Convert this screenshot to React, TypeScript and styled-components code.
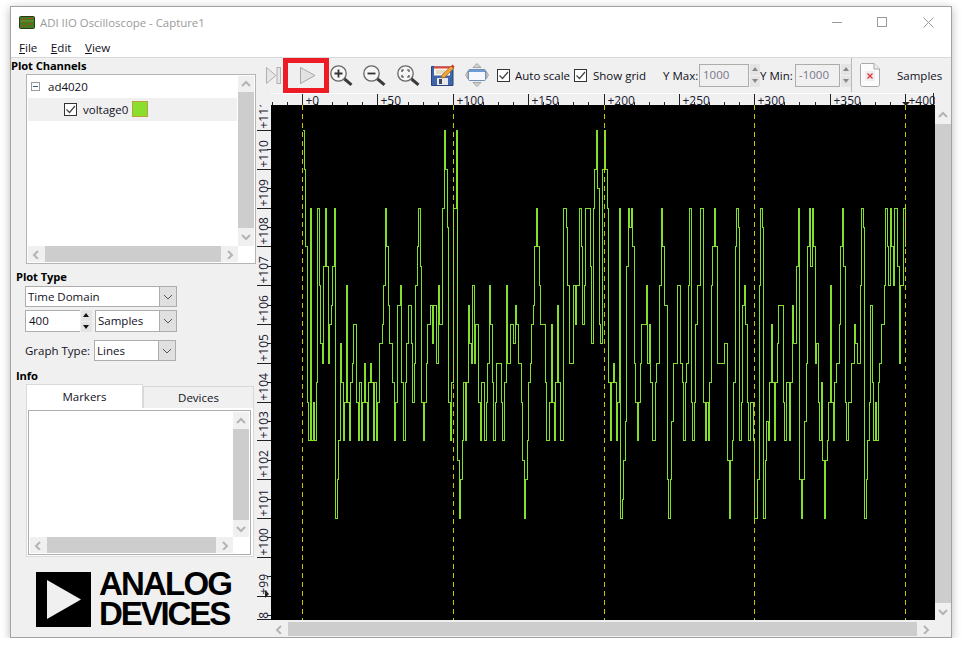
import React from "react";
import styled, { createGlobalStyle } from "styled-components";

const GlobalStyle = createGlobalStyle`
  html, body {
    margin: 0;
    padding: 0;
    background: #fff;
    overflow: hidden;
  }
  body {
    font-family: "Open Sans", "Liberation Sans", sans-serif;
    font-size: 11.5px;
    color: #10101c;
  }
`;

const Window = styled.div`
  box-sizing: border-box;
  width: 942px;
  height: 632px;
  margin: 6px 0 0 10px;
  display: flex;
  flex-direction: column;
  background: #f0f0f0;
  border: 1px solid #a3a3a3;
  box-shadow: 0 2px 9px rgba(0, 0, 0, 0.28);
`;

const TitleBar = styled.div`
  height: 30px;
  flex: none;
  display: flex;
  align-items: center;
  background: #fff;
  padding-left: 8px;
`;

const WindowTitle = styled.span`
  margin-left: 5px;
  font-size: 11.4px;
  color: #9a9a9a;
`;

const CaptionButtons = styled.div`
  margin-left: auto;
  display: flex;
`;

const CaptionButton = styled.div`
  width: 45.5px;
  height: 30px;
  display: flex;
  align-items: center;
  justify-content: center;
`;

const MenuBar = styled.div`
  height: 20px;
  flex: none;
  display: flex;
  background: #fff;
  border-bottom: 1px solid #d9d9d9;
  padding-left: 8px;
  gap: 13.5px;
  align-items: center;
`;

const MenuItem = styled.span`
  font-size: 11.6px;
  color: #10101c;
  & u { text-underline-offset: 1px; }
`;

const Body = styled.div`
  flex: 1;
  display: flex;
  min-height: 0;
`;

const Sidebar = styled.div`
  width: 246px;
  flex: none;
  display: flex;
  flex-direction: column;
`;

const SectionLabel = styled.div<{ $indent: number; $top: number }>`
  height: 16px;
  line-height: 16px;
  font-weight: 700;
  font-size: 11.2px;
  letter-spacing: -0.1px;
  color: #000;
  margin: ${(p) => p.$top}px 0 0 ${(p) => p.$indent}px;
`;

const TreeBox = styled.div`
  box-sizing: border-box;
  width: 230px;
  height: 190px;
  margin-left: 15px;
  background: #fff;
  border: 1px solid #b4b4b4;
  display: grid;
  grid-template-columns: 1fr 16px;
  grid-template-rows: 1fr 16px;
  padding: 1px;
`;

const TreeList = styled.div`
  padding-top: 1px;
  min-width: 0;
`;

const TreeRow = styled.div<{ $selected?: boolean; $indent: number }>`
  box-sizing: border-box;
  display: flex;
  align-items: center;
  height: ${(p) => (p.$selected ? 23 : 20)}px;
  margin-bottom: ${(p) => (p.$selected ? 0 : 1)}px;
  padding-left: ${(p) => p.$indent}px;
  padding-bottom: 1px;
  background: ${(p) => (p.$selected ? "#f0f0f0" : "transparent")};
  margin-right: 1px;
`;

const Expander = styled.span`
  box-sizing: border-box;
  width: 9px;
  height: 9px;
  border: 1px solid #9a9a9a;
  position: relative;
  margin-right: 8px;
  &::after {
    content: "";
    position: absolute;
    left: 1px;
    right: 1px;
    top: 3px;
    height: 1px;
    background: #3a5a90;
  }
`;

const Swatch = styled.span<{ $color: string }>`
  box-sizing: border-box;
  width: 16px;
  height: 16px;
  margin-left: 4px;
  background: ${(p) => p.$color};
  border: 1px solid #b7a53a;
`;

const RowText = styled.span`
  margin-left: 6px;
`;

const Checkbox = styled.span`
  box-sizing: border-box;
  width: 13px;
  height: 13px;
  flex: none;
  display: inline-flex;
  align-items: center;
  justify-content: center;
  background: #fff;
  border: 1px solid #333;
`;

const FormRow = styled.div<{ $indent: number; $top: number; $h: number }>`
  display: flex;
  align-items: stretch;
  height: ${(p) => p.$h}px;
  margin: ${(p) => p.$top}px 0 0 ${(p) => p.$indent}px;
`;

const Combo = styled.div<{ $w: number }>`
  box-sizing: border-box;
  width: ${(p) => p.$w}px;
  display: flex;
  background: #fff;
  border: 1px solid #adadad;
`;

const ComboText = styled.span`
  flex: 1;
  padding: 0 0 1px 2px;
  display: flex;
  align-items: center;
`;

const ComboArrow = styled.span`
  width: 16px;
  background: #e0e0e0;
  border-left: 1px solid #adadad;
  display: flex;
  align-items: center;
  justify-content: center;
`;

const NumberField = styled.div<{ $w: number; $disabled?: boolean }>`
  box-sizing: border-box;
  width: ${(p) => p.$w}px;
  display: flex;
  align-items: center;
  padding: 0 0 1px 3px;
  background: ${(p) => (p.$disabled ? "#f0f0f0" : "#fff")};
  color: ${(p) => (p.$disabled ? "#76768c" : "#10101c")};
  border: 1px solid #adadad;
  border-right-width: ${(p) => (p.$disabled ? 1 : 0)}px;
`;

const SpinButtons = styled.div<{ $muted?: boolean }>`
  width: ${(p) => (p.$muted ? 10 : 11)}px;
  margin: ${(p) => (p.$muted ? "0 0 0 1px" : "0 3px 0 1px")};
  display: flex;
  flex-direction: column;
  gap: 1px;
`;

const SpinButton = styled.span<{ $down?: boolean; $muted?: boolean }>`
  flex: 1;
  background: #e4e4e4;
  position: relative;
  &::after {
    content: "";
    position: absolute;
    left: 2px;
    top: 3px;
    border-left: 3px solid transparent;
    border-right: 3px solid transparent;
    ${(p) => (p.$down ? "border-top" : "border-bottom")}: 4px solid ${(p) => (p.$muted ? "#888" : "#111")};
  }
`;

const FieldLabel = styled.span<{ $w: number }>`
  width: ${(p) => p.$w}px;
  flex: none;
  display: flex;
  align-items: center;
  white-space: nowrap;
`;

const TabStrip = styled.div`
  display: flex;
  align-items: flex-end;
  height: 24px;
  margin-left: 15px;
`;

const Tab = styled.div<{ $active?: boolean; $w: number }>`
  box-sizing: border-box;
  width: ${(p) => p.$w}px;
  height: ${(p) => (p.$active ? 24 : 22)}px;
  padding-bottom: 1px;
  display: flex;
  align-items: center;
  justify-content: center;
  background: ${(p) => (p.$active ? "#fff" : "#f0f0f0")};
  border: 1px solid #d9d9d9;
  border-bottom: 0;
`;

const TabPane = styled.div`
  box-sizing: border-box;
  width: 228px;
  height: 149px;
  margin-left: 15px;
  padding: 2px 1px;
  background: #fff;
  border: 1px solid #d9d9d9;
  border-top: 0;
`;

const InfoList = styled.div`
  box-sizing: border-box;
  height: 145px;
  margin-right: 1px;
  border: 1px solid #adadad;
  display: grid;
  grid-template-columns: 1fr 16px;
  grid-template-rows: 1fr 16px;
  padding: 1px;
`;

const ScrollTrack = styled.div<{ $vertical?: boolean; $grow?: boolean }>`
  display: flex;
  flex-direction: ${(p) => (p.$vertical ? "column" : "row")};
  flex: ${(p) => (p.$grow ? 1 : "initial")};
  background: #f0f0f0;
`;

const ScrollEnd = styled.span<{ $len: number; $vertical?: boolean }>`
  flex: none;
  ${(p) => (p.$vertical ? "height" : "width")}: ${(p) => p.$len}px;
  display: flex;
  align-items: center;
  justify-content: center;
`;

const ScrollThumb = styled.span`
  flex: 1;
  background: #cdcdcd;
`;

const Logo = styled.div`
  display: flex;
  align-items: center;
  margin: 12px 0 0 25px;
  gap: 8px;
`;

const LogoText = styled.div`
  font-family: "Liberation Sans", Arial, sans-serif;
  font-weight: 700;
  font-size: 33px;
  line-height: 30px;
  color: #000;
`;

const LogoLine = styled.div<{ $spacing: number }>`
  letter-spacing: ${(p) => p.$spacing}px;
`;

const PlotColumn = styled.div`
  flex: 1;
  min-width: 0;
  display: flex;
  flex-direction: column;
`;

const Toolbar = styled.div`
  box-sizing: border-box;
  height: 35px;
  flex: none;
  display: flex;
  align-items: center;
  padding: 0 0 1px 9px;
`;

const ToolIcon = styled.span<{ $w: number; $gap?: number }>`
  width: ${(p) => p.$w}px;
  margin-left: ${(p) => p.$gap ?? 0}px;
  flex: none;
  display: flex;
  align-items: center;
  justify-content: flex-start;
`;

const HighlightedButton = styled.span`
  box-sizing: border-box;
  width: 46px;
  height: 35px;
  margin: 1px 0 0 2px;
  padding-left: 4px;
  flex: none;
  display: flex;
  align-items: center;
  justify-content: center;
  border: 5px solid #ed1c24;
`;

const ToolLabel = styled.span<{ $w: number; $gap: number }>`
  width: ${(p) => p.$w}px;
  margin-left: ${(p) => p.$gap}px;
  flex: none;
  white-space: nowrap;
`;

const ToolField = styled.div`
  height: 23px;
  display: flex;
  align-items: stretch;
  flex: none;
`;

const ToolSeparator = styled.span`
  width: 1px;
  height: 34px;
  background: #b9b9b9;
  flex: none;
`;

const ChartGrid = styled.div`
  flex: 1;
  display: grid;
  grid-template-columns: 14px 664px 16px;
  grid-template-rows: 12px 515px 17px;
`;

const Drawing = styled.svg`
  display: block;
`;

const RulerDrawing = styled(Drawing)<{ $span?: boolean }>`
  background: #f0f0f0;
  ${(p) => (p.$span ? "grid-row: 1 / span 2; grid-column: 1;" : "")}
`;

const PlotDrawing = styled(Drawing)`
  background: #000;
`;

const ChartCorner = styled.div`
  background: #f0f0f0;
`;

const HScrollWrap = styled.div`
  padding-top: 2px;
  padding-bottom: 1px;
  display: flex;
`;

const Chevron = ({ dir, color = "#b4b4b4" }: { dir: "up" | "down" | "left" | "right"; color?: string }) => {
  const points = {
    up: "1,6 5,2 9,6",
    down: "1,2 5,6 9,2",
    left: "6,1 2,5 6,9",
    right: "3,1 7,5 3,9",
  }[dir];
  return (
    <Drawing width="10" height="10" viewBox="0 0 10 8">
      <polyline points={points} fill="none" stroke={color} strokeWidth="2" />
    </Drawing>
  );
};

const Combobox = ({ w, text }: { w: number; text: string }) => (
  <Combo $w={w}>
    <ComboText>{text}</ComboText>
    <ComboArrow>
      <svg width="10" height="6" viewBox="0 0 10 6">
        <polyline points="1,1 5,5 9,1" fill="none" stroke="#555" strokeWidth="1" />
      </svg>
    </ComboArrow>
  </Combo>
);

const Check = () => (
  <Checkbox>
    <svg width="11" height="11" viewBox="0 0 11 11">
      <polyline points="1.5,5.5 4.5,8.5 10,2" fill="none" stroke="#444" strokeWidth="1.2" />
    </svg>
  </Checkbox>
);

const VScroll = ({ top, bottom }: { top: number; bottom: number }) => (
  <ScrollTrack $vertical>
    <ScrollEnd $vertical $len={top}><Chevron dir="up" /></ScrollEnd>
    <ScrollThumb />
    <ScrollEnd $vertical $len={bottom}><Chevron dir="down" /></ScrollEnd>
  </ScrollTrack>
);

const HScroll = ({ left, right }: { left: number; right: number }) => (
  <ScrollTrack $grow>
    <ScrollEnd $len={left}><Chevron dir="left" /></ScrollEnd>
    <ScrollThumb />
    <ScrollEnd $len={right}><Chevron dir="right" /></ScrollEnd>
  </ScrollTrack>
);

const AppIcon = () => (
  <svg width="16" height="13" viewBox="0 0 16 13">
    <rect x="0.5" y="0.5" width="15" height="12" rx="1" fill="#3f7d1e" stroke="#2c3a1c" />
    <path d="M2 3h4M9 2.5h5M3 6h3M8 8h5M3 10h4" stroke="#c23a2a" strokeWidth="1.2" />
    <path d="M1 5h14" stroke="#7fb04a" strokeWidth="0.6" />
  </svg>
);

const SkipIcon = () => (
  <svg width="15" height="17" viewBox="0 0 15 17">
    <path d="M0.5 0.5 L10 8.5 L0.5 16.5 Z" fill="#e6e6e6" stroke="#b0b0b0" />
    <rect x="11" y="0.5" width="3.5" height="16" fill="#e6e6e6" stroke="#b0b0b0" />
  </svg>
);

const PlayIcon = () => (
  <svg width="16" height="17" viewBox="0 0 16 17">
    <path d="M0.5 0.5 L15 8.5 L0.5 16.5 Z" fill="#e2e2e2" stroke="#a6a6a6" />
  </svg>
);

const Lens = ({ children }: { children?: React.ReactNode }) => (
  <svg width="23" height="21" viewBox="0 0 23 21">
    <circle cx="8.5" cy="8.5" r="7.7" fill="#f6f6f6" stroke="#666" strokeWidth="1.3" />
    <path d="M14.5 14 L21.5 19.8" stroke="#3a3a3a" strokeWidth="3" />
    {children}
  </svg>
);

const SaveIcon = () => (
  <svg width="24" height="22" viewBox="0 0 24 22">
    <path d="M0.5 2.5 L20 2.5 L22 4.5 L22 21.5 L0.5 21.5 Z" fill="#3f66a8" stroke="#27457c" />
    <rect x="3" y="2.5" width="16" height="9" fill="#fbf6ea" />
    <rect x="3" y="2.5" width="16" height="2" fill="#e0443a" />
    <path d="M5 7h9M5 9h9" stroke="#c9c2ae" />
    <rect x="6" y="14" width="11" height="7" fill="#e8e8ea" />
    <rect x="8" y="15" width="3" height="5" fill="#3a4a66" />
    <path d="M11 11 L20 2 L22.5 4.5 L13.5 13.5 L10.5 14 Z" fill="#f0a23a" stroke="#a8661c" strokeWidth="0.7" />
    <path d="M20 2 L21.5 0.6 L23.5 2.6 L22.5 4.5 Z" fill="#d8362e" />
  </svg>
);

const ResizeIcon = () => (
  <svg width="24" height="24" viewBox="0 0 24 24">
    <path d="M12 0.5 L16 4.5 L8 4.5 Z M12 23.5 L16 19.5 L8 19.5 Z M0.5 12 L3 8 L3 16 Z M23.5 12 L21 8 L21 16 Z" fill="#d2d2d2" stroke="#8c8c8c" strokeWidth="0.7" />
    <rect x="3.5" y="6.5" width="17" height="11" rx="1" fill="#f4f7fb" stroke="#6f8db8" />
    <rect x="4" y="7" width="16" height="2" fill="#6d9bd4" />
  </svg>
);

const DocIcon = () => (
  <svg width="20" height="24" viewBox="0 0 20 24">
    <path d="M1.5 0.5 L14 0.5 L19.5 6 L19.5 21.5 Q19.5 23.5 17.5 23.5 L2.5 23.5 Q0.5 23.5 0.5 21.5 L0.5 1.5 Z" fill="#fbfbfb" stroke="#a9a9a9" />
    <path d="M14 0.5 L14 6 L19.5 6" fill="#ececec" stroke="#a9a9a9" />
    <rect x="5" y="8" width="10" height="10" fill="#eeeeee" />
    <path d="M7.5 10.5 L12.5 15.5 M12.5 10.5 L7.5 15.5" stroke="#e8323c" strokeWidth="1.3" />
  </svg>
);

const LogoMark = () => (
  <Drawing width="55" height="55" viewBox="0 0 55 55">
    <rect width="55" height="55" fill="#000" />
    <polygon points="11,8 45,27.5 11,47" fill="#f0f0f0" />
  </Drawing>
);

// plot geometry
const PLOT_W = 664;
const PLOT_H = 515;
const X0 = 31; // sample 0 in plot coords
const PX_PER_SAMPLE = 1.5075;
const Y_TOP = 25; // y of value 111
const PX_PER_UNIT = 38.8;

const sampleX = (s: number) => Math.round(X0 + s * PX_PER_SAMPLE) + 0.5;
const halfY = (h: number) => Math.round(Y_TOP + (h * PX_PER_UNIT) / 2) + 0.5;

// spike positions read off the capture: [sample, half-step level below the top]
const PEAKS: [number, number][] = [
  [0, 0], [1, 2], [5, 4], [10, 4], [15, 4], [21, 4], [55, 4], [77, 4], [94, 0], [95, 2], [100, 4], [101, 4], [102, 0],
  [155, 4], [156, 6], [173, 4], [174, 4], [175, 5], [184, 4], [188, 4], [189, 4], [190, 4], [195, 0], [194, 2], [200, 0], [201, 2],
  [210, 4], [216, 4], [217, 5], [218, 4], [238, 4], [257, 4], [264, 4], [265, 4], [273, 4], [288, 4], [289, 5],
  [304, 4], [305, 5], [329, 4], [336, 4], [338, 4], [358, 4], [371, 4], [372, 5], [387, 4], [390, 4], [393, 4], [394, 4], [399, 4],
];
const DIPS: [number, number][] = [
  [4, 16], [6, 16], [8, 16], [22, 20], [23, 18], [27, 16], [31, 16], [37, 16], [39, 16], [43, 16], [47, 16], [49, 16], [61, 16], [67, 16], [80, 16], [98, 16],
  [104, 20], [106, 16], [108, 16], [118, 16], [121, 16], [127, 16], [133, 16], [147, 20], [148, 18], [149, 16], [162, 16], [163, 16], [167, 16], [171, 16], [172, 16],
  [204, 16], [208, 16], [211, 20], [212, 19], [213, 17], [222, 16], [232, 16], [233, 16], [243, 20], [244, 18], [253, 16], [259, 16], [267, 16], [269, 16],
  [283, 20], [284, 17], [285, 16], [290, 16], [296, 16], [299, 16], [300, 20], [301, 20], [306, 20], [307, 17], [309, 16], [313, 16], [320, 16], [323, 16],
  [331, 20], [332, 18], [343, 16], [346, 20], [347, 17], [348, 16], [352, 16], [361, 16], [373, 20], [374, 18], [375, 16], [379, 16], [381, 16],
];

const buildTrace = () => {
  let seed = 20240611;
  const rnd = () => {
    seed = (seed + 0x6d2b79f5) | 0;
    let t = Math.imul(seed ^ (seed >>> 15), 1 | seed);
    t = (t + Math.imul(t ^ (t >>> 7), 61 | t)) ^ t;
    return ((t ^ (t >>> 14)) >>> 0) / 4294967296;
  };
  // the noise walks between 107 and 105 in half steps, rarely lower
  const steps = [-4, -4, -2, -2, -1, 0, 0, 1, 2, 2, 4];
  const values: number[] = [10];
  for (let s = 1; s <= 400; s++) {
    let next = values[s - 1] + steps[Math.floor(rnd() * steps.length)];
    if (next < 8) next = 8 + (8 - next);
    if (next > 12) next = rnd() < 0.1 ? 14 : 12;
    values.push(next);
  }
  // staircase next to each spike, as the decimated capture shows
  PEAKS.forEach(([s, h]) => {
    if (s > 0 && values[s - 1] > h + 2) values[s - 1] = Math.min(8, h + 2 + Math.floor(rnd() * 3));
    if (s < 400 && values[s + 1] > h + 2) values[s + 1] = Math.min(8, h + 2 + Math.floor(rnd() * 3));
  });
  DIPS.forEach(([s, h]) => {
    if (s > 0 && values[s - 1] < h - 2) values[s - 1] = Math.max(13, h - 2 - Math.floor(rnd() * 2));
    if (s < 400 && values[s + 1] < h - 2) values[s + 1] = Math.max(13, h - 2 - Math.floor(rnd() * 2));
  });
  PEAKS.forEach(([s, h]) => { values[s] = h; });
  DIPS.forEach(([s, h]) => { values[s] = h; });
  let d = `M${sampleX(0)} ${halfY(values[0])}`;
  values.forEach((v, s) => {
    if (s === 0) return;
    d += `H${sampleX(s)}V${halfY(v)}`;
  });
  return d;
};

const TRACE = buildTrace();
const CURSORS = [0, 100, 200, 300, 400];

const rulerFont = { fontFamily: '"Open Sans", sans-serif', fontSize: 12, fill: "#1a1a30" };

const TopRuler = () => {
  const ticks: React.ReactNode[] = [];
  for (let v = -20; v <= 420; v += 10) {
    const x = Math.round(X0 + v * PX_PER_SAMPLE) + 0.5;
    if (x < 0 || x > PLOT_W) continue;
    const major = v % 50 === 0;
    ticks.push(<line key={v} x1={x} x2={x} y1={major ? 1 : 9} y2={12} stroke="#222" />);
    if (major && v >= 0 && v <= 400) {
      ticks.push(
        <text key={`t${v}`} x={x + 3} y={12} {...rulerFont}>{`+${v}`}</text>
      );
    }
  }
  return (
    <RulerDrawing width={PLOT_W} height={12}>
      <line x1="0" x2={PLOT_W} y1="0.5" y2="0.5" stroke="#fff" />
      {ticks}
      <line x1="662.5" x2="662.5" y1="0" y2="12" stroke="#222" />
      <polygon points="631,9 639,9 635,13" fill="#222" />
    </RulerDrawing>
  );
};

const LeftRuler = () => {
  const items: React.ReactNode[] = [];
  for (let i = 0; i <= 26; i++) {
    const y = Math.round(Y_TOP + (i * PX_PER_UNIT) / 2) + 0.5 + 12;
    const major = i % 2 === 0;
    items.push(<line key={i} x1={major ? 0 : 10} x2={14} y1={y} y2={y} stroke="#222" />);
    if (major) {
      const value = 111 - i / 2;
      items.push(
        <text key={`t${i}`} x={0} y={0} transform={`translate(11 ${y - 2}) rotate(-90)`} {...rulerFont}>
          {`+${value}`}
        </text>
      );
    }
  }
  return (
    <RulerDrawing $span width={14} height={527}>
      {items}
      <line x1="0" x2="14" y1="526.5" y2="526.5" stroke="#222" />
      <polygon points="8,497 12,501 8,505" fill="#222" />
      <rect x="0" y="0" width="14" height="12" fill="#f0f0f0" />
    </RulerDrawing>
  );
};

const PlotCanvas = () => (
  <PlotDrawing width={PLOT_W} height={PLOT_H} shapeRendering="crispEdges">
    <path d={TRACE} fill="none" stroke="#82e02c" strokeWidth="1" />
    {CURSORS.map((c) => (
      <line
        key={c}
        x1={sampleX(c)}
        x2={sampleX(c)}
        y1={0}
        y2={PLOT_H}
        stroke="#c8c800"
        strokeDasharray="5 4"
      />
    ))}
  </PlotDrawing>
);

export default function App() {
  return (
    <>
      <GlobalStyle />
      <Window>
        <TitleBar>
          <AppIcon />
          <WindowTitle>ADI IIO Oscilloscope - Capture1</WindowTitle>
          <CaptionButtons>
            <CaptionButton>
              <svg width="11" height="11" viewBox="0 0 11 11"><path d="M0 5.5H10" stroke="#9a9a9a" /></svg>
            </CaptionButton>
            <CaptionButton>
              <svg width="11" height="11" viewBox="0 0 11 11"><rect x="0.5" y="0.5" width="9" height="9" fill="none" stroke="#9a9a9a" /></svg>
            </CaptionButton>
            <CaptionButton>
              <svg width="11" height="11" viewBox="0 0 11 11"><path d="M0.5 0.5L10.5 10.5M10.5 0.5L0.5 10.5" stroke="#9a9a9a" /></svg>
            </CaptionButton>
          </CaptionButtons>
        </TitleBar>
        <MenuBar>
          <MenuItem><u>F</u>ile</MenuItem>
          <MenuItem><u>E</u>dit</MenuItem>
          <MenuItem><u>V</u>iew</MenuItem>
        </MenuBar>
        <Body>
          <Sidebar>
            <SectionLabel $indent={0} $top={0}>Plot Channels</SectionLabel>
            <TreeBox>
              <TreeList>
                <TreeRow $indent={3}>
                  <Expander />
                  ad4020
                </TreeRow>
                <TreeRow $selected $indent={36}>
                  <Check />
                  <RowText>voltage0</RowText>
                  <Swatch $color="#8ade2d" />
                </TreeRow>
              </TreeList>
              <VScroll top={16} bottom={18} />
              <HScroll left={17} right={17} />
            </TreeBox>
            <SectionLabel $indent={5} $top={5}>Plot Type</SectionLabel>
            <FormRow $indent={14} $top={1} $h={21}>
              <Combobox w={152} text="Time Domain" />
            </FormRow>
            <FormRow $indent={14} $top={3} $h={22}>
              <NumberField $w={55}>400</NumberField>
              <SpinButtons>
                <SpinButton />
                <SpinButton $down />
              </SpinButtons>
              <Combobox w={82} text="Samples" />
            </FormRow>
            <FormRow $indent={14} $top={8} $h={21}>
              <FieldLabel $w={69}>Graph Type:</FieldLabel>
              <Combobox w={82} text="Lines" />
            </FormRow>
            <SectionLabel $indent={5} $top={7}>Info</SectionLabel>
            <TabStrip>
              <Tab $active $w={117}>Markers</Tab>
              <Tab $w={111}>Devices</Tab>
            </TabStrip>
            <TabPane>
              <InfoList>
                <div />
                <VScroll top={17} bottom={17} />
                <HScroll left={17} right={17} />
              </InfoList>
            </TabPane>
            <Logo>
              <LogoMark />
              <LogoText>
                <LogoLine $spacing={-1.8}>ANALOG</LogoLine>
                <LogoLine $spacing={-2.1}>DEVICES</LogoLine>
              </LogoText>
            </Logo>
          </Sidebar>
          <PlotColumn>
            <Toolbar>
              <ToolIcon $w={15}><SkipIcon /></ToolIcon>
              <HighlightedButton><PlayIcon /></HighlightedButton>
              <ToolIcon $w={24} $gap={1}>
                <Lens>
                  <path d="M8.5 4.5V12.5M4.5 8.5H12.5" stroke="#333" strokeWidth="1.8" />
                </Lens>
              </ToolIcon>
              <ToolIcon $w={24} $gap={9}>
                <Lens>
                  <path d="M4.5 8.5H12.5" stroke="#333" strokeWidth="1.8" />
                </Lens>
              </ToolIcon>
              <ToolIcon $w={24} $gap={10}>
                <Lens>
                  <path d="M5 7V5H7M10 5H12V7M12 10V12H10M7 12H5V10" fill="none" stroke="#444" strokeWidth="1.2" />
                </Lens>
              </ToolIcon>
              <ToolIcon $w={24} $gap={10}><SaveIcon /></ToolIcon>
              <ToolIcon $w={24} $gap={10}><ResizeIcon /></ToolIcon>
              <ToolIcon $w={13} $gap={8}><Check /></ToolIcon>
              <ToolLabel $w={59} $gap={5}>Auto scale</ToolLabel>
              <Check />
              <ToolLabel $w={70} $gap={6}>Show grid</ToolLabel>
              <ToolLabel $w={36} $gap={0}>Y Max:</ToolLabel>
              <ToolField>
                <NumberField $w={50} $disabled>1000</NumberField>
                <SpinButtons $muted>
                  <SpinButton $muted />
                  <SpinButton $muted $down />
                </SpinButtons>
              </ToolField>
              <ToolLabel $w={35} $gap={0}>Y Min:</ToolLabel>
              <ToolField>
                <NumberField $w={45} $disabled>-1000</NumberField>
                <SpinButtons $muted>
                  <SpinButton $muted />
                  <SpinButton $muted $down />
                </SpinButtons>
              </ToolField>
              <ToolSeparator />
              <ToolIcon $w={20} $gap={8}><DocIcon /></ToolIcon>
              <ToolLabel $w={46} $gap={17}>Samples</ToolLabel>
            </Toolbar>
            <ChartGrid>
              <LeftRuler />
              <TopRuler />
              <ChartCorner />
              <PlotCanvas />
              <VScroll top={19} bottom={17} />
              <ChartCorner />
              <HScrollWrap>
                <HScroll left={17} right={18} />
              </HScrollWrap>
              <ChartCorner />
            </ChartGrid>
          </PlotColumn>
        </Body>
      </Window>
    </>
  );
}
